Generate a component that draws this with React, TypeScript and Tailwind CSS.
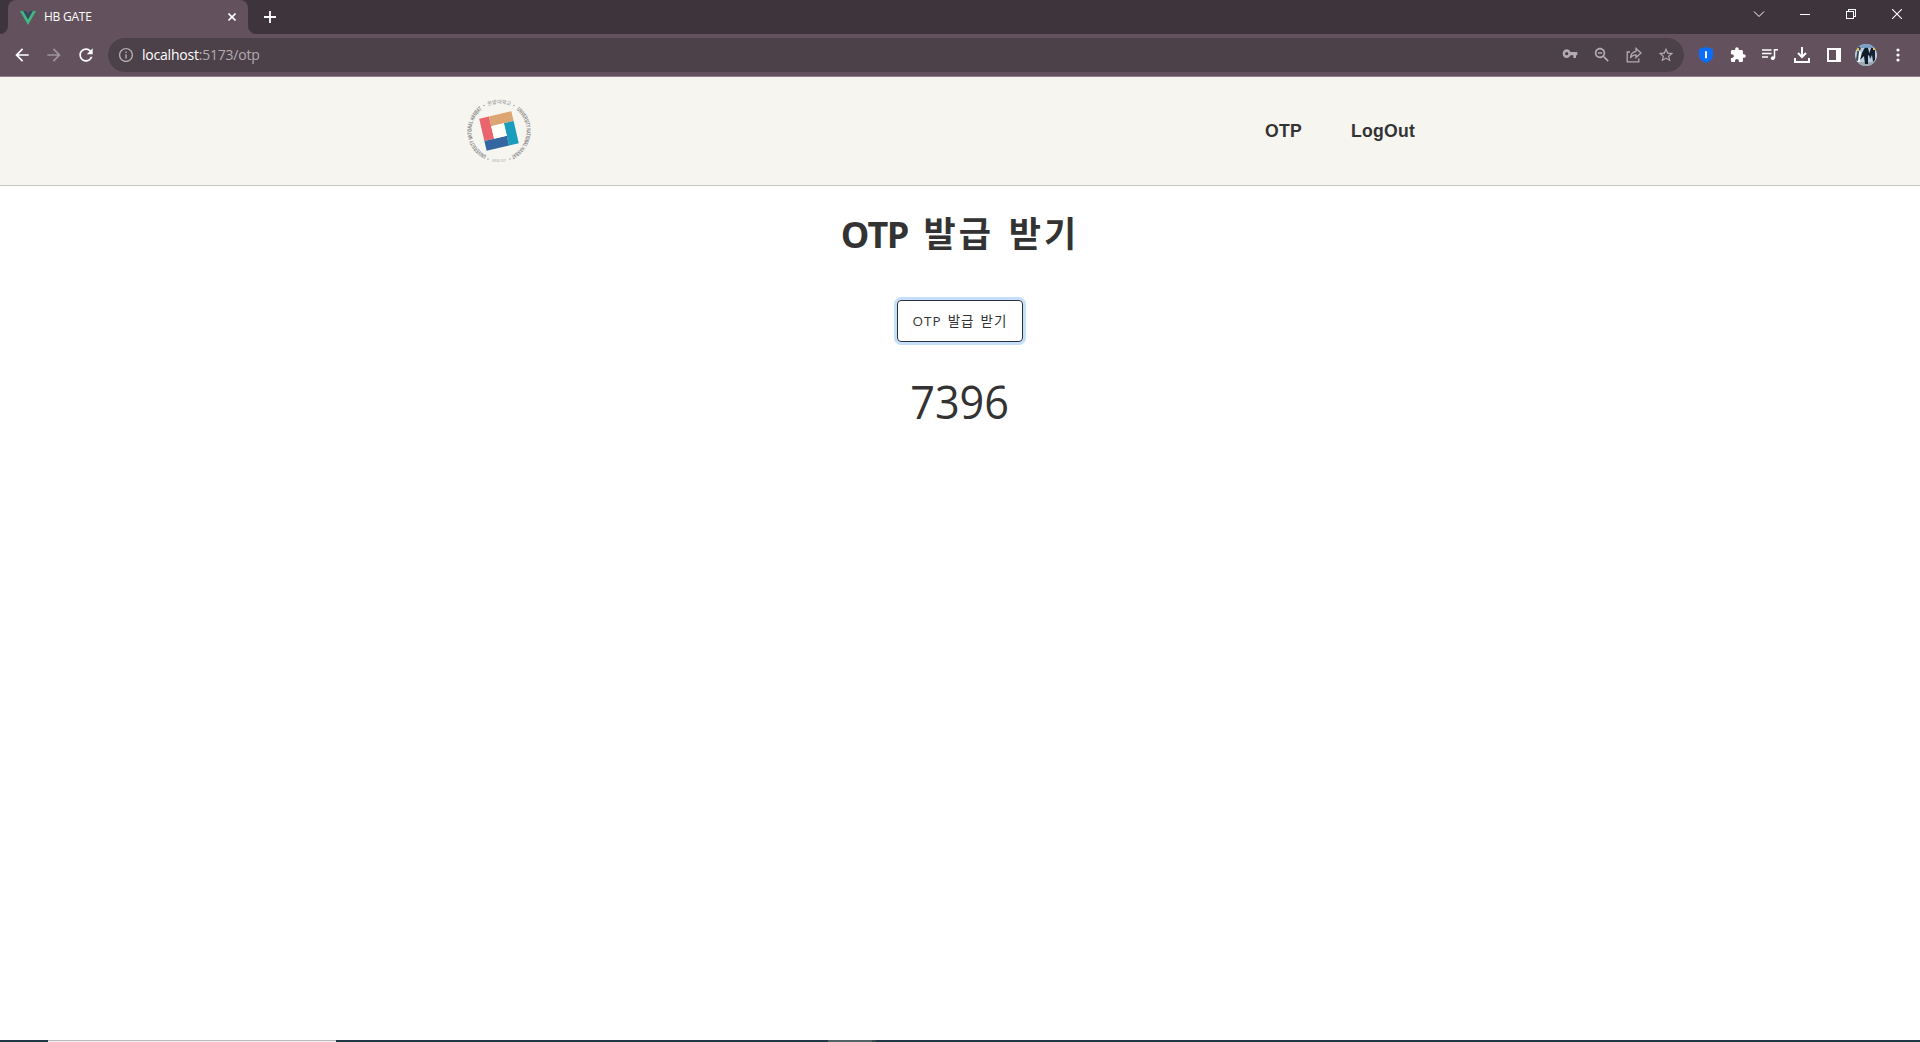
import React from "react";

const UI = "font-['Open_Sans','Noto_Sans',sans-serif]";

function Glyph({ d, className }: { d: string; className: string }) {
  return (
    <svg viewBox="0 0 24 24" className={`shrink-0 ${className}`} fill="currentColor">
      <path d={d} />
    </svg>
  );
}

function TabStrip() {
  return (
    <div className="flex h-[34px] bg-[#3e343b] text-white">
      <div className="flex w-2 items-end bg-[#63525d]">
        <div className="h-[34px] w-2 rounded-br-lg bg-[#3e343b]" />
      </div>
      <div className="w-60 bg-[#3e343b]">
        <div className="flex h-[34px] items-center rounded-t-lg bg-[#63525d] pl-3 pr-3">
          <svg viewBox="0 0 16 14" className="mt-px h-[14px] w-4 shrink-0">
            <path d="M0 0H3.2L8 8.2 12.8 0H16L8 14Z" fill="#41b883" />
            <path d="M3.2 0H6.2L8 3.1 9.8 0H12.8L8 8.2Z" fill="#34495e" />
          </svg>
          <span className={`ml-[8px] text-[12px] leading-4 tracking-[-0.25px] ${UI}`}>HB GATE</span>
          <svg viewBox="0 0 8 8" className="ml-auto h-2 w-2" stroke="currentColor" strokeWidth="1.6">
            <path d="M.5.5 7.5 7.5M7.5.5.5 7.5" />
          </svg>
        </div>
      </div>
      <div className="w-2 bg-[#63525d]">
        <div className="h-[34px] w-2 rounded-bl-lg bg-[#3e343b]" />
      </div>
      <svg viewBox="0 0 12 12" className="ml-2 mt-[11px] h-3 w-3" stroke="currentColor" strokeWidth="1.8">
        <path d="M6 0V12M0 6H12" />
      </svg>
      <div className="ml-auto mr-[18px] flex h-7 items-center">
        <svg viewBox="0 0 12 10" className="h-[10px] w-3" fill="none" stroke="currentColor">
          <path d="M1 2.5 6 7.5 11 2.5" />
        </svg>
        <svg viewBox="0 0 10 10" className="ml-[35px] h-[10px] w-[10px]" stroke="currentColor" shapeRendering="crispEdges">
          <path d="M0 5.5H10" />
        </svg>
        <svg viewBox="0 0 10 10" className="ml-9 h-[10px] w-[10px]" fill="none" stroke="currentColor" shapeRendering="crispEdges">
          <path d="M.5 2.5H7.5V9.5H.5ZM2.5 2.5V.5H9.5V7.5H7.5" />
        </svg>
        <svg viewBox="0 0 10 10" className="ml-9 h-[10px] w-[10px]" stroke="currentColor" strokeWidth="1.1">
          <path d="M0 0 10 10M10 0 0 10" />
        </svg>
      </div>
    </div>
  );
}

function Avatar() {
  return (
    <svg viewBox="0 0 22 22" className="ml-[14px] h-[22px] w-[22px]">
      <clipPath id="face"><circle cx="11" cy="11" r="11" /></clipPath>
      <g clipPath="url(#face)">
        <path d="M0 0H22V22H0Z" fill="#b9cde2" />
        <path d="M0 0H22V4H0Z" fill="#7e9fc4" />
        <path d="M0 18H22V22H0Z" fill="#9fa9b0" />
        <path d="M3 8Q5 6 6 9L5 18H2Z" fill="#f0f4f8" />
        <path d="M3 3Q5 2 6 5L4 7 3 17 1 16Z" fill="#33414e" />
        <path d="M9 5Q10 3 13 4L14 8 16 13 13 11 13 20H10L9 12 5 16 7 9Z" fill="#111c2a" />
        <path d="M16 4Q18 3 20 6L20 16 18 18 17 11 15 15 14 10Z" fill="#172332" />
        <path d="M2 4H4V7H2ZM18 4H20V6H18Z" fill="#e5c64f" />
      </g>
    </svg>
  );
}

function Toolbar() {
  return (
    <div className="flex h-[43px] items-center border-b border-[#8f828a] bg-[#63525d] pb-[4px] pt-[4px] text-white">
      <Glyph className="ml-3 h-5 w-5" d="M20 11H7.83l5.59-5.59L12 4l-8 8 8 8 1.41-1.41L7.83 13H20v-2z" />
      <Glyph className="ml-3 h-5 w-5 text-[#a0959c]" d="M12 4l-1.41 1.41L16.17 11H4v2h12.17l-5.58 5.59L12 20l8-8z" />
      <Glyph className="ml-3 h-5 w-5" d="M17.65 6.35C16.2 4.9 14.21 4 12 4c-4.42 0-7.99 3.58-7.99 8s3.57 8 7.99 8c3.73 0 6.84-2.55 7.73-6h-2.08c-.82 2.33-3.04 4-5.65 4-3.31 0-6-2.69-6-6s2.69-6 6-6c1.66 0 3.14.69 4.22 1.78L13 11h7V4l-2.35 2.35z" />
      <div className="ml-3 flex h-[34px] w-[1576px] items-center rounded-full bg-[#4c4149] pl-[10px] pr-[10px] text-[#b3abb0]">
        <Glyph className="h-4 w-4 scale-[1.06]" d="M11 7h2v2h-2zM11 11h2v6h-2zM12 2C6.48 2 2 6.48 2 12s4.48 10 10 10 10-4.48 10-10S17.52 2 12 2zm0 18c-4.41 0-8-3.59-8-8s3.59-8 8-8 8 3.59 8 8-3.59 8-8 8z" />
        <span className={`ml-[8px] text-[14px] leading-5 tracking-[-0.22px] ${UI}`}>
          <span className="text-white">localhost</span>:5173/otp
        </span>
        <div className="ml-auto flex items-center gap-4">
          <Glyph className="-ml-px mt-[-2px] h-4 w-4" d="M12.65 9C11.83 6.67 9.61 5 7 5c-3.31 0-6 2.91-6 6.5S3.69 18 7 18c2.61 0 4.83-1.67 5.65-4H17v4h4v-4h2V9H12.65zM7 14a2.5 2.5 0 1 1 0-5 2.5 2.5 0 0 1 0 5z" />
          <Glyph className="h-4 w-4 scale-[1.2]" d="M15.5 14h-.79l-.28-.27C15.41 12.59 16 11.11 16 9.5 16 5.91 13.09 3 9.5 3S3 5.91 3 9.5 5.91 16 9.5 16c1.61 0 3.09-.59 4.23-1.57l.27.28v.79l5 4.99L20.49 19l-4.99-5zm-6 0C7.01 14 5 11.99 5 9.5S7.01 5 9.5 5 14 7.01 14 9.5 11.99 14 9.5 14zM6.8 8.7h5.4v1.6H6.8z" />
          <svg viewBox="0 0 16 16" className="h-4 w-4" fill="none" stroke="currentColor" strokeWidth="1.3">
            <path d="M4 5H1.2V14.8H12.8V11.5M10 1.5 15 6 10 10.500V7.800C7.500 7.800 5.700 8.800 4.500 11 4.700 7.500 6.500 4.800 10 4.300Z" />
          </svg>
          <Glyph className="h-4 w-4 scale-110" d="M22 9.24l-7.19-.62L12 2 9.19 8.63 2 9.24l5.46 4.73L5.82 21 12 17.27 18.18 21l-1.63-7.03L22 9.24zM12 15.4l-3.76 2.27 1-4.28-3.32-2.88 4.38-.38L12 6.1l1.71 4.04 4.38.38-3.32 2.88 1 4.28L12 15.4z" />
        </div>
      </div>
      <svg viewBox="0 0 14 16" className="ml-[15px] h-4 w-[14px] shrink-0">
        <path d="M7 0 14 2V9.5C13.5 12.5 10 14.8 7 16 4 14.8.5 12.5 0 9.5V2Z" fill="#0a6dfb" />
        <path d="M6 4.2H8V11.2H6Z" fill="#fff" />
      </svg>
      <Glyph className="ml-[17px] h-4 w-4 scale-[1.06]" d="M20.5 11H19V7c0-1.1-.9-2-2-2h-4V3.5C13 2.12 11.88 1 10.5 1S8 2.12 8 3.5V5H4c-1.1 0-1.99.9-1.99 2v3.8H3.5c1.49 0 2.7 1.21 2.7 2.7s-1.21 2.7-2.7 2.7H2V20c0 1.1.9 2 2 2h3.8v-1.5c0-1.49 1.21-2.7 2.7-2.7 1.49 0 2.7 1.21 2.7 2.7V22H17c1.1 0 2-.9 2-2v-4h1.5c1.38 0 2.5-1.12 2.5-2.5S21.88 11 20.5 11z" />
      <svg viewBox="0 0 16 14" className="ml-[16px] h-[14px] w-4 shrink-0" fill="none" stroke="currentColor" strokeWidth="1.5">
        <path d="M0 2H9.5M0 5.5H9.5M0 9H6M16 1.8H12.5V10" /><circle cx="10.8" cy="10.2" r="1.9" fill="currentColor" stroke="none" />
      </svg>
      <svg viewBox="0 0 16 16" className="ml-4 h-4 w-4 shrink-0" fill="none" stroke="currentColor" strokeWidth="2">
        <path d="M8 0V10M4 6 8 10 12 6M1 11V15H15V11" />
      </svg>
      <svg viewBox="0 0 14 14" className="ml-[17px] h-[14px] w-[14px] shrink-0">
        <path fillRule="evenodd" d="M0 0H14V14H0ZM2 2V12H9V2Z" fill="#fff" />
      </svg>
      <Avatar />
      <svg viewBox="0 0 4 14" className="ml-[19px] h-[14px] w-1 shrink-0" fill="currentColor">
        <circle cx="2" cy="2" r="1.6" /><circle cx="2" cy="7" r="1.6" /><circle cx="2" cy="12" r="1.6" />
      </svg>
    </div>
  );
}

function UniversityLogo() {
  return (
    <svg viewBox="-34 -34 68 68" className="h-[68px] w-[68px] overflow-visible">
      <defs>
        <path id="ring" d="M0 27.5A27.5 27.5 0 0 1 0 -27.5A27.5 27.5 0 0 1 0 27.5" />
      </defs>
      <g fill="#808084" fontSize="6" fontFamily="Liberation Sans, Noto Sans CJK KR, sans-serif">
        <text fontWeight="bold"><textPath href="#ring" startOffset="13" textLength="55" lengthAdjust="spacingAndGlyphs">UNIVERSITY NATIONAL HANBAT</textPath></text>
        <text fontSize="5" fill="#8a8a8d"><textPath href="#ring" startOffset="75" textLength="23" lengthAdjust="spacing">한밭대학교</textPath></text>
        <text fontWeight="bold"><textPath href="#ring" startOffset="105" textLength="55" lengthAdjust="spacingAndGlyphs">UNIVERSITY NATIONAL HANBAT</textPath></text>
        <text x="-7" y="31" fontSize="4" textLength="14" lengthAdjust="spacingAndGlyphs" fill="#a5a5a5">SINCE 1927</text>
      </g>
      <g fill="#a5a5a7">
        <circle cx="-15" cy="-25.5" r=".8" /><circle cx="15" cy="-25.5" r=".8" />
        <circle cx="-11" cy="28" r=".8" /><circle cx="11" cy="28" r=".8" />
      </g>
      <g transform="rotate(-13)">
        <path d="M-16.5 -16.5H-6.5V6.5H-16.5Z" fill="#ea646d" />
        <path d="M-6.5 -16.5H16.5V-6.5H-6.5Z" fill="#dda571" />
        <path d="M6.5 -6.5H16.5V16.5H6.5Z" fill="#1a9dbd" />
        <path d="M-16.5 6.5H6.5V16.5H-16.5Z" fill="#3566a1" />
        <path d="M-6.5 -6.5H6.5V6.5H-6.5Z" fill="#fffef9" />
      </g>
    </svg>
  );
}

export default function App() {
  return (
    <div className="flex h-[1042px] w-[1920px] flex-col overflow-hidden bg-white text-[#333]">
      <TabStrip />
      <Toolbar />
      <header className="flex h-[109px] items-start justify-between border-b border-[#c5c5c3] bg-[#f6f5f0] pl-[465px] pr-[505px] pt-5">
        <UniversityLogo />
        <nav className="flex gap-[49px] pt-[22px] font-['Liberation_Sans',sans-serif] text-[17.6px] font-bold leading-6 tracking-[0.25px]">
          <a>OTP</a>
          <a>LogOut</a>
        </nav>
      </header>
      <main className="flex flex-1 flex-col items-center">
        <h1 className="mt-[20px] flex h-[56px] items-center whitespace-nowrap font-['Open_Sans','Noto_Sans_CJK_KR',sans-serif] text-[36px]">
          <span className="pt-0.5 font-bold tracking-[-1.8px]">OTP</span>
          <span className="ml-[16px] mt-[-4px] font-['Noto_Sans_CJK_KR',sans-serif] text-[35px] font-bold tracking-[3px] [word-spacing:4px]">발급 받기</span>
        </h1>
        <button className="mt-[38px] flex h-[42px] w-[126px] items-center justify-center whitespace-nowrap rounded-[4px] border border-[#2c3038] pt-px font-['Open_Sans','Noto_Sans_CJK_KR',sans-serif] text-[13.5px] tracking-[1px] ring-[3px] ring-[#c6dffc] [word-spacing:1.5px]">
          OTP 발급 받기
        </button>
        <p className="mt-[29px] scale-x-[0.94] font-['Open_Sans',sans-serif] text-[46px] font-normal leading-[60px]">7396</p>
      </main>
      <div className="flex h-[2px] bg-[#213945]">
        <div className="ml-12 h-[2px] w-72 border-t border-[#bbb] bg-[#f3f3f3]" />
        <div className="ml-[492px] w-11 bg-[#526368]" />
        <div className="w-1 bg-[#3a4a50]" />
      </div>
    </div>
  );
}
